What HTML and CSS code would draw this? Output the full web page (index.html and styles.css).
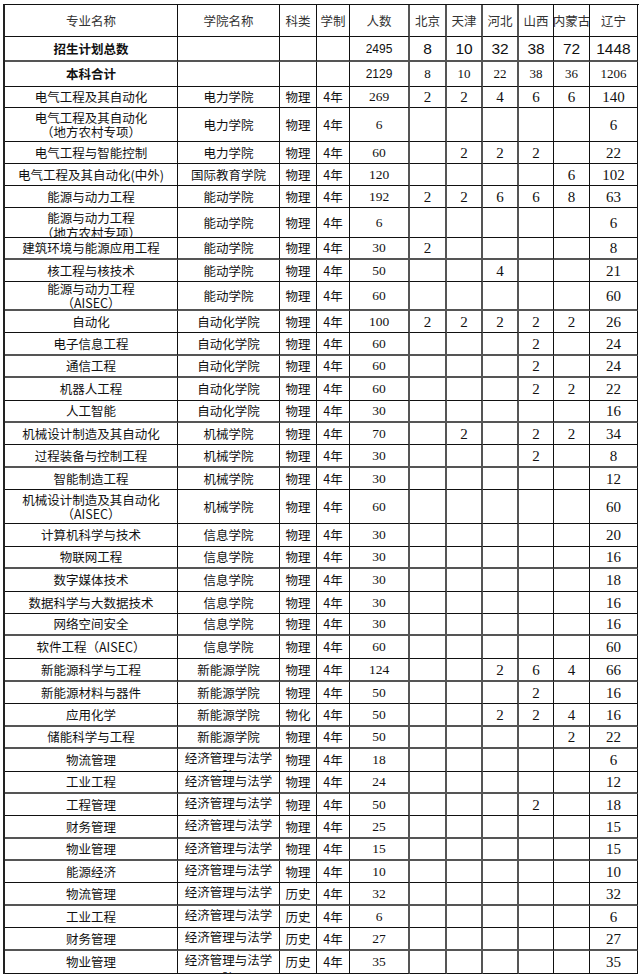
FILE: index.html
```html
<!DOCTYPE html>
<html lang="zh">
<head>
<meta charset="utf-8">
<title>招生计划</title>
<link rel="stylesheet" href="styles.css">
</head>
<body>
<div class="tbl">
  <div class="row hd h32"><div class="c">专业名称</div><div class="c">学院名称</div><div class="c">科类</div><div class="c">学制</div><div class="c">人数</div><div class="c">北京</div><div class="c">天津</div><div class="c">河北</div><div class="c">山西</div><div class="c">内蒙古</div><div class="c">辽宁</div></div>
  <div class="row tot h25 g"><div class="c b">招生计划总数</div><div class="c"></div><div class="c"></div><div class="c"></div><div class="c">2495</div><div class="c">8</div><div class="c">10</div><div class="c">32</div><div class="c">38</div><div class="c">72</div><div class="c">1448</div></div>
  <div class="row sub h25"><div class="c b">本科合计</div><div class="c"></div><div class="c"></div><div class="c"></div><div class="c">2129</div><div class="c">8</div><div class="c">10</div><div class="c">22</div><div class="c">38</div><div class="c">36</div><div class="c">1206</div></div>
  <div class="row h21"><div class="c">电气工程及其自动化</div><div class="c">电力学院</div><div class="c">物理</div><div class="c">4年</div><div class="c">269</div><div class="c">2</div><div class="c">2</div><div class="c">4</div><div class="c">6</div><div class="c">6</div><div class="c">140</div></div>
  <div class="row h34"><div class="c two">电气工程及其自动化<br>（地方农村专项）</div><div class="c">电力学院</div><div class="c">物理</div><div class="c">4年</div><div class="c">6</div><div class="c"></div><div class="c"></div><div class="c"></div><div class="c"></div><div class="c"></div><div class="c">6</div></div>
  <div class="row h22"><div class="c">电气工程与智能控制</div><div class="c">电力学院</div><div class="c">物理</div><div class="c">4年</div><div class="c">60</div><div class="c"></div><div class="c">2</div><div class="c">2</div><div class="c">2</div><div class="c"></div><div class="c">22</div></div>
  <div class="row h22"><div class="c">电气工程及其自动化(中外)</div><div class="c">国际教育学院</div><div class="c">物理</div><div class="c">4年</div><div class="c">120</div><div class="c"></div><div class="c"></div><div class="c"></div><div class="c"></div><div class="c">6</div><div class="c">102</div></div>
  <div class="row h22"><div class="c">能源与动力工程</div><div class="c">能动学院</div><div class="c">物理</div><div class="c">4年</div><div class="c">192</div><div class="c">2</div><div class="c">2</div><div class="c">6</div><div class="c">6</div><div class="c">8</div><div class="c">63</div></div>
  <div class="row h30"><div class="c two clip">能源与动力工程<br>（地方农村专项）</div><div class="c">能动学院</div><div class="c">物理</div><div class="c">4年</div><div class="c">6</div><div class="c"></div><div class="c"></div><div class="c"></div><div class="c"></div><div class="c"></div><div class="c">6</div></div>
  <div class="row h22 g"><div class="c">建筑环境与能源应用工程</div><div class="c">能动学院</div><div class="c">物理</div><div class="c">4年</div><div class="c">30</div><div class="c">2</div><div class="c"></div><div class="c"></div><div class="c"></div><div class="c"></div><div class="c">8</div></div>
  <div class="row h22"><div class="c">核工程与核技术</div><div class="c">能动学院</div><div class="c">物理</div><div class="c">4年</div><div class="c">50</div><div class="c"></div><div class="c"></div><div class="c">4</div><div class="c"></div><div class="c"></div><div class="c">21</div></div>
  <div class="row h29 g"><div class="c two">能源与动力工程<br>（AISEC）</div><div class="c">能动学院</div><div class="c">物理</div><div class="c">4年</div><div class="c">60</div><div class="c"></div><div class="c"></div><div class="c"></div><div class="c"></div><div class="c"></div><div class="c">60</div></div>
  <div class="row h22"><div class="c">自动化</div><div class="c">自动化学院</div><div class="c">物理</div><div class="c">4年</div><div class="c">100</div><div class="c">2</div><div class="c">2</div><div class="c">2</div><div class="c">2</div><div class="c">2</div><div class="c">26</div></div>
  <div class="row h23 g"><div class="c">电子信息工程</div><div class="c">自动化学院</div><div class="c">物理</div><div class="c">4年</div><div class="c">60</div><div class="c"></div><div class="c"></div><div class="c"></div><div class="c">2</div><div class="c"></div><div class="c">24</div></div>
  <div class="row h22 g"><div class="c">通信工程</div><div class="c">自动化学院</div><div class="c">物理</div><div class="c">4年</div><div class="c">60</div><div class="c"></div><div class="c"></div><div class="c"></div><div class="c">2</div><div class="c"></div><div class="c">24</div></div>
  <div class="row h23"><div class="c">机器人工程</div><div class="c">自动化学院</div><div class="c">物理</div><div class="c">4年</div><div class="c">60</div><div class="c"></div><div class="c"></div><div class="c"></div><div class="c">2</div><div class="c">2</div><div class="c">22</div></div>
  <div class="row h22 g"><div class="c">人工智能</div><div class="c">自动化学院</div><div class="c">物理</div><div class="c">4年</div><div class="c">30</div><div class="c"></div><div class="c"></div><div class="c"></div><div class="c"></div><div class="c"></div><div class="c">16</div></div>
  <div class="row h22"><div class="c">机械设计制造及其自动化</div><div class="c">机械学院</div><div class="c">物理</div><div class="c">4年</div><div class="c">70</div><div class="c"></div><div class="c">2</div><div class="c"></div><div class="c">2</div><div class="c">2</div><div class="c">34</div></div>
  <div class="row h23 g"><div class="c">过程装备与控制工程</div><div class="c">机械学院</div><div class="c">物理</div><div class="c">4年</div><div class="c">30</div><div class="c"></div><div class="c"></div><div class="c"></div><div class="c">2</div><div class="c"></div><div class="c">8</div></div>
  <div class="row h22"><div class="c">智能制造工程</div><div class="c">机械学院</div><div class="c">物理</div><div class="c">4年</div><div class="c">30</div><div class="c"></div><div class="c"></div><div class="c"></div><div class="c"></div><div class="c"></div><div class="c">12</div></div>
  <div class="row h34"><div class="c two">机械设计制造及其自动化<br>（AISEC）</div><div class="c">机械学院</div><div class="c">物理</div><div class="c">4年</div><div class="c">60</div><div class="c"></div><div class="c"></div><div class="c"></div><div class="c"></div><div class="c"></div><div class="c">60</div></div>
  <div class="row h23"><div class="c">计算机科学与技术</div><div class="c">信息学院</div><div class="c">物理</div><div class="c">4年</div><div class="c">30</div><div class="c"></div><div class="c"></div><div class="c"></div><div class="c"></div><div class="c"></div><div class="c">20</div></div>
  <div class="row h22 g"><div class="c">物联网工程</div><div class="c">信息学院</div><div class="c">物理</div><div class="c">4年</div><div class="c">30</div><div class="c"></div><div class="c"></div><div class="c"></div><div class="c"></div><div class="c"></div><div class="c">16</div></div>
  <div class="row h23"><div class="c">数字媒体技术</div><div class="c">信息学院</div><div class="c">物理</div><div class="c">4年</div><div class="c">30</div><div class="c"></div><div class="c"></div><div class="c"></div><div class="c"></div><div class="c"></div><div class="c">18</div></div>
  <div class="row h22"><div class="c">数据科学与大数据技术</div><div class="c">信息学院</div><div class="c">物理</div><div class="c">4年</div><div class="c">30</div><div class="c"></div><div class="c"></div><div class="c"></div><div class="c"></div><div class="c"></div><div class="c">16</div></div>
  <div class="row h22 g"><div class="c">网络空间安全</div><div class="c">信息学院</div><div class="c">物理</div><div class="c">4年</div><div class="c">30</div><div class="c"></div><div class="c"></div><div class="c"></div><div class="c"></div><div class="c"></div><div class="c">16</div></div>
  <div class="row h23"><div class="c">软件工程（AISEC）</div><div class="c">信息学院</div><div class="c">物理</div><div class="c">4年</div><div class="c">60</div><div class="c"></div><div class="c"></div><div class="c"></div><div class="c"></div><div class="c"></div><div class="c">60</div></div>
  <div class="row h23 g"><div class="c">新能源科学与工程</div><div class="c">新能源学院</div><div class="c">物理</div><div class="c">4年</div><div class="c">124</div><div class="c"></div><div class="c"></div><div class="c">2</div><div class="c">6</div><div class="c">4</div><div class="c">66</div></div>
  <div class="row h22"><div class="c">新能源材料与器件</div><div class="c">新能源学院</div><div class="c">物理</div><div class="c">4年</div><div class="c">50</div><div class="c"></div><div class="c"></div><div class="c"></div><div class="c">2</div><div class="c"></div><div class="c">16</div></div>
  <div class="row h23 g"><div class="c">应用化学</div><div class="c">新能源学院</div><div class="c">物化</div><div class="c">4年</div><div class="c">50</div><div class="c"></div><div class="c"></div><div class="c">2</div><div class="c">2</div><div class="c">4</div><div class="c">16</div></div>
  <div class="row h22 g"><div class="c">储能科学与工程</div><div class="c">新能源学院</div><div class="c">物理</div><div class="c">4年</div><div class="c">50</div><div class="c"></div><div class="c"></div><div class="c"></div><div class="c"></div><div class="c">2</div><div class="c">22</div></div>
  <div class="row h23"><div class="c">物流管理</div><div class="c top">经济管理与法学院</div><div class="c">物理</div><div class="c">4年</div><div class="c">18</div><div class="c"></div><div class="c"></div><div class="c"></div><div class="c"></div><div class="c"></div><div class="c">6</div></div>
  <div class="row h22 g"><div class="c">工业工程</div><div class="c top">经济管理与法学院</div><div class="c">物理</div><div class="c">4年</div><div class="c">24</div><div class="c"></div><div class="c"></div><div class="c"></div><div class="c"></div><div class="c"></div><div class="c">12</div></div>
  <div class="row h22"><div class="c">工程管理</div><div class="c top">经济管理与法学院</div><div class="c">物理</div><div class="c">4年</div><div class="c">50</div><div class="c"></div><div class="c"></div><div class="c"></div><div class="c">2</div><div class="c"></div><div class="c">18</div></div>
  <div class="row h23 g"><div class="c">财务管理</div><div class="c top">经济管理与法学院</div><div class="c">物理</div><div class="c">4年</div><div class="c">25</div><div class="c"></div><div class="c"></div><div class="c"></div><div class="c"></div><div class="c"></div><div class="c">15</div></div>
  <div class="row h22 g"><div class="c">物业管理</div><div class="c top">经济管理与法学院</div><div class="c">物理</div><div class="c">4年</div><div class="c">15</div><div class="c"></div><div class="c"></div><div class="c"></div><div class="c"></div><div class="c"></div><div class="c">15</div></div>
  <div class="row h22"><div class="c">能源经济</div><div class="c top">经济管理与法学院</div><div class="c">物理</div><div class="c">4年</div><div class="c">10</div><div class="c"></div><div class="c"></div><div class="c"></div><div class="c"></div><div class="c"></div><div class="c">10</div></div>
  <div class="row h23 g"><div class="c">物流管理</div><div class="c top">经济管理与法学院</div><div class="c">历史</div><div class="c">4年</div><div class="c">32</div><div class="c"></div><div class="c"></div><div class="c"></div><div class="c"></div><div class="c"></div><div class="c">32</div></div>
  <div class="row h22"><div class="c">工业工程</div><div class="c top">经济管理与法学院</div><div class="c">历史</div><div class="c">4年</div><div class="c">6</div><div class="c"></div><div class="c"></div><div class="c"></div><div class="c"></div><div class="c"></div><div class="c">6</div></div>
  <div class="row h23 g"><div class="c">财务管理</div><div class="c top">经济管理与法学院</div><div class="c">历史</div><div class="c">4年</div><div class="c">27</div><div class="c"></div><div class="c"></div><div class="c"></div><div class="c"></div><div class="c"></div><div class="c">27</div></div>
  <div class="row h23"><div class="c">物业管理</div><div class="c top">经济管理与法学院</div><div class="c">历史</div><div class="c">4年</div><div class="c">35</div><div class="c"></div><div class="c"></div><div class="c"></div><div class="c"></div><div class="c"></div><div class="c">35</div></div>
</div>
</body>
</html>
```
FILE: styles.css
```css
html, body {
  margin: 0;
  padding: 0;
  background: #fff;
}
body {
  padding: 4px 0 0 3px;
  font-family: "Noto Sans CJK SC", "Liberation Sans", sans-serif;
  font-size: 12.5px;
  color: #111;
}
.tbl {
  width: 635px;
  border-top: 1px solid #111;
  border-left: 2px solid #222;
}
.row {
  display: grid;
  grid-template-columns: 173px 102px 37px 33px 60px 37px 36px 36px 35px 36px 48px;
}
.h21 { height: 21px; }
.h22 { height: 22px; }
.h23 { height: 23px; }
.h25 { height: 25px; }
.h29 { height: 29px; }
.h30 { height: 30px; }
.h32 { height: 32px; }
.h34 { height: 34px; }

.c {
  box-sizing: border-box;
  border-right: 1px solid #111;
  border-bottom: 1px solid #111;
  overflow: hidden;
  display: flex;
  align-items: center;
  justify-content: center;
  text-align: center;
  padding: 0 2px;
  white-space: nowrap;
  line-height: 16px;
}
.row.g > .c { border-bottom: 2px solid #555; }
.row > .c:nth-child(5),
.row > .c:nth-child(6),
.row > .c:nth-child(7),
.row > .c:nth-child(8) {
  border-right: 2px solid #555;
}
/* numbers */
.row > .c:nth-child(5) {
  font-family: "Liberation Serif", serif;
  font-size: 13.5px;
}
.row > .c:nth-child(n+6) {
  font-family: "Liberation Serif", serif;
  font-size: 15px;
}
.hd > .c {
  color: #333;
  font-family: "Noto Sans CJK SC", sans-serif !important;
  font-size: 12.5px !important;
}
.tot > .c:nth-child(5) {
  font-family: "Liberation Sans", sans-serif;
  font-size: 12px;
}
.tot > .c:nth-child(n+6) {
  font-family: "Liberation Sans", sans-serif;
  font-size: 15.5px;
}
.sub > .c:nth-child(5) {
  font-family: "Liberation Sans", sans-serif;
  font-size: 12px;
}
.sub > .c:nth-child(n+6) {
  font-size: 13px;
}
.b { font-weight: bold; }
.two {
  white-space: normal;
  line-height: 14px;
}
.clip {
  align-items: flex-start;
  padding-top: 2px;
  line-height: 15px;
}
.top {
  display: block;
  white-space: normal;
  line-height: 18px;
  padding: 0 3px;
}
```
